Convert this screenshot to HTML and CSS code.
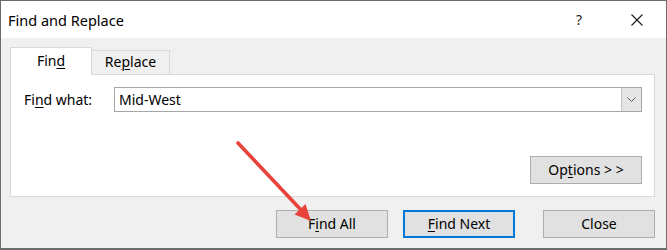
FILE: index.html
```html
<!DOCTYPE html>
<html lang="en">
<head>
  <meta charset="UTF-8">
  <title>Find and Replace</title>
  <link rel="stylesheet" href="styles.css">
</head>
<body>
  <div class="dialog">
    <div class="titlebar">
      <span class="title">Find and Replace</span>
      <span class="help">?</span>
      <span class="close-x">
        <svg width="12" height="12" viewBox="0 0 12 12">
          <path d="M0.5 0.5 L11.5 11.5 M11.5 0.5 L0.5 11.5" stroke="#1a1a1a" stroke-width="1.1" fill="none"/>
        </svg>
      </span>
    </div>

    <div class="dialog-body">
      <div class="tabs">
        <div class="tab active">Fin<u>d</u></div>
        <div class="tab">Re<u>p</u>lace</div>
      </div>

      <div class="panel">
        <div class="field-row">
          <label class="field-label">Fi<u>n</u>d what:</label>
          <div class="combo">
            <span class="combo-value">Mid-West</span>
            <span class="combo-btn">
              <svg width="9" height="5" viewBox="0 0 9 5">
                <path d="M0.5 0.5 L4.5 4.5 L8.5 0.5" stroke="#5a5a5a" stroke-width="1" fill="none"/>
              </svg>
            </span>
          </div>
        </div>
        <div class="options-row">
          <button class="btn">Op<u>t</u>ions &gt; &gt;</button>
        </div>
      </div>

      <div class="actions">
        <button class="btn">F<u>i</u>nd All</button>
        <button class="btn btn-default"><u>F</u>ind Next</button>
        <button class="btn btn-close">Close</button>
      </div>
    </div>

    <!-- annotation arrow drawn over the dialog -->
    <svg class="arrow" width="667" height="250" viewBox="0 0 667 250">
      <line x1="238" y1="143" x2="302" y2="211" stroke="#e8433a" stroke-width="3.6" stroke-linecap="round"/>
      <polygon points="311,221 294.5,214.5 305.5,204" fill="#e8433a"/>
    </svg>
  </div>
</body>
</html>
```

FILE: styles.css
```css
:root {
  --face: #f0f0f0;
  --btn-bg: #e1e1e1;
  --btn-border: #adadad;
  --panel-border: #d9d9d9;
  --focus: #0078d7;
  --arrow: #e8433a;
}

* {
  box-sizing: border-box;
  margin: 0;
  padding: 0;
}

body {
  font-family: 'Segoe UI', 'Noto Sans', 'Open Sans', sans-serif;
  font-size: 14px;
  color: #000;
  background: #fff;
}

u {
  text-decoration-thickness: 1px;
  text-underline-offset: 2px;
}

.dialog {
  position: relative;
  width: 667px;
  height: 250px;
  border: 1px solid #6b6b6b;
  border-bottom-width: 2px;
  display: flex;
  flex-direction: column;
  overflow: hidden;
}

.titlebar {
  height: 37px;
  background: #fff;
  display: flex;
  align-items: center;
  padding-left: 7px;
}

.title {
  flex: 1;
  font-size: 14.5px;
}

.help {
  width: 10px;
  margin-right: 45px;
  font-size: 14px;
  color: #222;
}

.close-x {
  display: flex;
  margin-right: 23px;
}

.dialog-body {
  flex: 1;
  background: var(--face);
  padding: 9px 11px 0 9px;
}

.tabs {
  display: flex;
  align-items: flex-end;
  height: 28px;
  margin-bottom: -1px;
  position: relative;
  z-index: 1;
}

.tab {
  height: 25px;
  width: 78px;
  display: flex;
  align-items: center;
  justify-content: center;
  border: 1px solid var(--panel-border);
  border-left: none;
  background: var(--face);
  padding-bottom: 2px;
}

.tab.active {
  height: 28px;
  width: 82px;
  background: #fff;
  border-left: 1px solid var(--panel-border);
  border-bottom: none;
  padding-bottom: 3px;
}

.panel {
  height: 123px;
  background: #fff;
  border: 1px solid var(--panel-border);
  padding: 12px 12px 12px 12px;
  display: flex;
  flex-direction: column;
  justify-content: space-between;
}

.field-row {
  display: flex;
  align-items: center;
  height: 25px;
}

.field-label {
  width: 91px;
  padding-left: 1px;
}

.combo {
  flex: 1;
  height: 25px;
  border: 1px solid #a6a6a6;
  display: flex;
  align-items: center;
}

.combo-value {
  flex: 1;
  padding-left: 4px;
  padding-bottom: 1px;
}

.combo-btn {
  width: 20px;
  height: 100%;
  background: #e5e5e5;
  border-left: 1px solid #c4c4c4;
  display: flex;
  align-items: center;
  justify-content: center;
}

.options-row {
  display: flex;
  justify-content: flex-end;
}

.btn {
  width: 112px;
  height: 28px;
  background: var(--btn-bg);
  border: 1px solid var(--btn-border);
  font-family: inherit;
  font-size: 14px;
  color: #000;
  padding-bottom: 1px;
}

.btn-default {
  border: 2px solid var(--focus);
}

.actions {
  display: flex;
  justify-content: flex-end;
  gap: 15px;
  margin-top: 13px;
}

.actions .btn-close {
  margin-left: 13px;
}

.arrow {
  position: absolute;
  left: -1px;
  top: -1px;
  pointer-events: none;
}
```
